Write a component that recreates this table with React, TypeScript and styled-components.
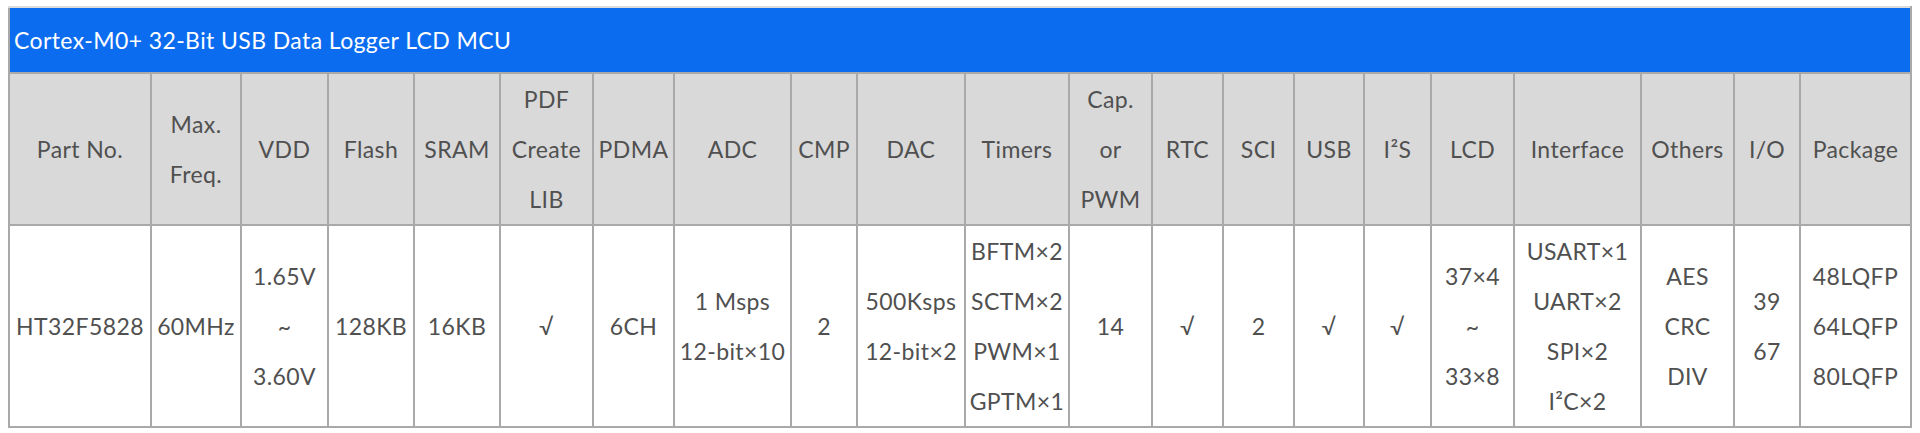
import React, { ReactElement } from 'react'
import styled, { createGlobalStyle } from 'styled-components'

const GlobalStyle = createGlobalStyle`
  body {
    margin: 6px 8px 0;
    background: #ffffff;
    font-family: Lato, 'Noto Sans', sans-serif;
  }
`

const SpecTable = styled.table`
  width: 1902px;
  table-layout: fixed;
  border-collapse: collapse;
  border: 2px solid #a9a9a9;
  font-size: 23px;
  letter-spacing: 0.4px;
  color: #505050;
`

const TitleCell = styled.th`
  background: #0b6cf0;
  color: #ffffff;
  font-weight: 400;
  text-align: left;
  line-height: 50px;
  padding: 7px 4px;
  border: 2px solid #a9a9a9;
  border-top-color: #dcdcdc;
`

const HeadCell = styled.th`
  background: #d9d9d9;
  font-weight: 400;
  text-align: center;
  vertical-align: middle;
  line-height: 50px;
  padding: 0 1px;
  border: 2px solid #a9a9a9;
  white-space: nowrap;
`

const BodyCell = styled.td`
  background: #ffffff;
  text-align: center;
  vertical-align: middle;
  line-height: 50px;
  padding: 0 1px;
  border: 2px solid #a9a9a9;
  white-space: nowrap;
`

type Column = {
  head: string[]
  body: string[]
  width: number
}

const columns: Column[] = [
  { head: ['Part No.'], body: ['HT32F5828'], width: 142 },
  { head: ['Max.', 'Freq.'], body: ['60MHz'], width: 90 },
  { head: ['VDD'], body: ['1.65V', '~', '3.60V'], width: 87 },
  { head: ['Flash'], body: ['128KB'], width: 86 },
  { head: ['SRAM'], body: ['16KB'], width: 86 },
  { head: ['PDF', 'Create', 'LIB'], body: ['√'], width: 93 },
  { head: ['PDMA'], body: ['6CH'], width: 81 },
  { head: ['ADC'], body: ['1 Msps', '12-bit×10'], width: 117 },
  { head: ['CMP'], body: ['2'], width: 66 },
  { head: ['DAC'], body: ['500Ksps', '12-bit×2'], width: 108 },
  { head: ['Timers'], body: ['BFTM×2', 'SCTM×2', 'PWM×1', 'GPTM×1'], width: 104 },
  { head: ['Cap.', 'or', 'PWM'], body: ['14'], width: 83 },
  { head: ['RTC'], body: ['√'], width: 71 },
  { head: ['SCI'], body: ['2'], width: 71 },
  { head: ['USB'], body: ['√'], width: 70 },
  { head: ['I²S'], body: ['√'], width: 67 },
  { head: ['LCD'], body: ['37×4', '~', '33×8'], width: 83 },
  { head: ['Interface'], body: ['USART×1', 'UART×2', 'SPI×2', 'I²C×2'], width: 127 },
  { head: ['Others'], body: ['AES', 'CRC', 'DIV'], width: 93 },
  { head: ['I/O'], body: ['39', '67'], width: 66 },
  { head: ['Package'], body: ['48LQFP', '64LQFP', '80LQFP'], width: 111 },
]

const Lines = ({ items }: { items: string[] }): ReactElement => (
  <>
    {items.map((line, i) => (
      <React.Fragment key={i}>
        {i > 0 && <br />}
        {line}
      </React.Fragment>
    ))}
  </>
)

const App = (): ReactElement => (
  <>
    <GlobalStyle />
    <SpecTable>
      <colgroup>
        {columns.map((col, i) => (
          <col key={i} style={{ width: col.width }} />
        ))}
      </colgroup>
      <thead>
        <tr>
          <TitleCell colSpan={columns.length}>Cortex-M0+ 32-Bit USB Data Logger LCD MCU</TitleCell>
        </tr>
        <tr>
          {columns.map((col, i) => (
            <HeadCell key={i}>
              <Lines items={col.head} />
            </HeadCell>
          ))}
        </tr>
      </thead>
      <tbody>
        <tr>
          {columns.map((col, i) => (
            <BodyCell key={i}>
              <Lines items={col.body} />
            </BodyCell>
          ))}
        </tr>
      </tbody>
    </SpecTable>
  </>
)

export default App
